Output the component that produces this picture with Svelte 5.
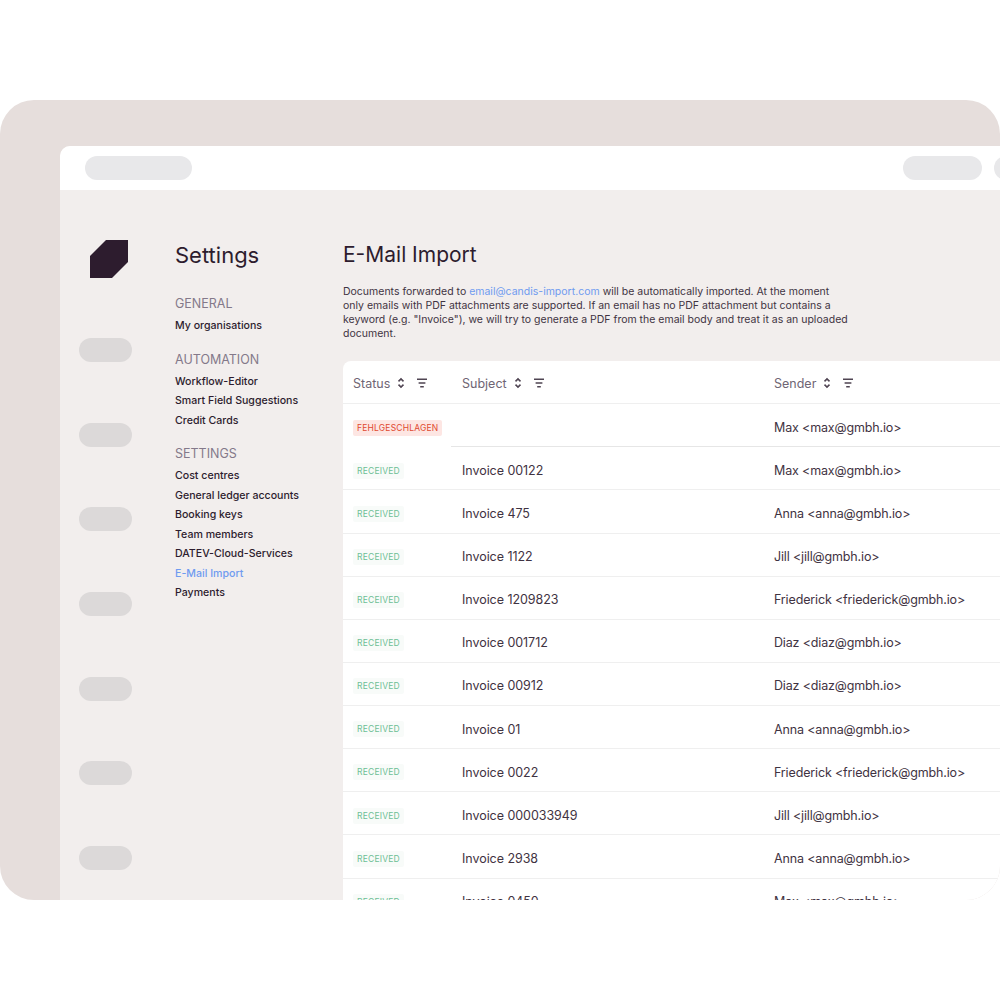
<script>
  const pillCount = 7;
  const pills = Array.from({ length: pillCount });
  const groups = [
    { title: 'GENERAL', items: ['My organisations'] },
    { title: 'AUTOMATION', items: ['Workflow-Editor', 'Smart Field Suggestions', 'Credit Cards'] },
    { title: 'SETTINGS', items: ['Cost centres', 'General ledger accounts', 'Booking keys', 'Team members', 'DATEV-Cloud-Services', 'E-Mail Import', 'Payments'] }
  ];
  const rows = [
    ['FEHLGESCHLAGEN', '', 'Max <max@gmbh.io>'],
    ['RECEIVED', 'Invoice 00122', 'Max <max@gmbh.io>'],
    ['RECEIVED', 'Invoice 475', 'Anna <anna@gmbh.io>'],
    ['RECEIVED', 'Invoice 1122', 'Jill <jill@gmbh.io>'],
    ['RECEIVED', 'Invoice 1209823', 'Friederick <friederick@gmbh.io>'],
    ['RECEIVED', 'Invoice 001712', 'Diaz <diaz@gmbh.io>'],
    ['RECEIVED', 'Invoice 00912', 'Diaz <diaz@gmbh.io>'],
    ['RECEIVED', 'Invoice 01', 'Anna <anna@gmbh.io>'],
    ['RECEIVED', 'Invoice 0022', 'Friederick <friederick@gmbh.io>'],
    ['RECEIVED', 'Invoice 000033949', 'Jill <jill@gmbh.io>'],
    ['RECEIVED', 'Invoice 2938', 'Anna <anna@gmbh.io>'],
    ['RECEIVED', 'Invoice 0450', 'Max <max@gmbh.io>']
  ];
  const cols = ['Status', 'Subject', 'Sender'];
</script>

<div class="page">
  <div class="frame">
    <div class="window">
      <header class="topbar">
        <span class="pill wide"></span>
        <span class="spacer"></span>
        <span class="pill mid"></span>
        <span class="pill mid"></span>
      </header>
      <div class="body">
        <aside class="rail">
          <svg class="logo" viewBox="0 0 38 38" width="38" height="38" aria-hidden="true">
            <path d="M16 0 H38 V22 L22 38 H0 V16 Z" fill="#2d1c2e"/>
          </svg>
          <div class="rail-pills">
            {#each pills as _}
              <span class="pill rail-pill"></span>
            {/each}
          </div>
        </aside>
        <nav class="nav">
          <h2>Settings</h2>
          {#each groups as g}
            <div class="group">
              <div class="group-title">{g.title}</div>
              <ul>
                {#each g.items as item}
                  <li class:active={item === 'E-Mail Import'}>{item}</li>
                {/each}
              </ul>
            </div>
          {/each}
        </nav>
        <main class="main">
          <h1>E-Mail Import</h1>
          <p class="intro">Documents forwarded to <span class="link">email@candis-import.com</span> will be automatically imported. At the moment only emails with PDF attachments are supported. If an email has no PDF attachment but contains a keyword (e.g. "Invoice"), we will try to generate a PDF from the email body and treat it as an uploaded document.</p>
          <section class="table">
            <div class="row head">
              {#each cols as c}
                <div class="th">
                  <span>{c}</span>
                  <svg class="sort" width="8" height="12" viewBox="0 0 8 12" aria-hidden="true">
                    <path d="M1.5 4.4 L4 1.9 L6.5 4.4 M1.5 7.6 L4 10.1 L6.5 7.6" fill="none" stroke="#4f4452" stroke-width="1.5"/>
                  </svg>
                  <svg class="filter" width="10" height="10" viewBox="0 0 10 10" aria-hidden="true">
                    <path d="M0 1.2 H10 M1.6 5 H8.4 M3.2 8.8 H6.8" fill="none" stroke="#4f4452" stroke-width="1.5"/>
                  </svg>
                </div>
              {/each}
            </div>
            {#each rows as r, i}
              <div class="row" class:first={i === 0}>
                <div class="cell"><span class="tag" class:fail={r[0] !== 'RECEIVED'}>{r[0]}</span></div>
                <div class="cell subject">{r[1]}</div>
                <div class="cell sender">{r[2]}</div>
              </div>
            {/each}
          </section>
        </main>
      </div>
    </div>
  </div>
</div>

<style>
  :global(body) {
    margin: 0;
    background: #fff;
  }
  .page {
    height: 1000px;
    padding-top: 100px;
    box-sizing: border-box;
    font-family: Inter, "Liberation Sans", sans-serif;
    color: #2d1c2e;
  }
  .frame {
    height: 800px;
    box-sizing: border-box;
    padding: 46px 0 0 60px;
    background: #e6dedc;
    border-radius: 34px;
    overflow: hidden;
  }
  .window {
    height: 100%;
    background: #f2eeed;
    border-top-left-radius: 10px;
    overflow: hidden;
  }
  .topbar {
    height: 44px;
    background: #fff;
    display: flex;
    align-items: center;
    gap: 12px;
    padding-left: 25px;
    width: 1000px;
    box-sizing: border-box;
  }
  .spacer {
    width: 687px;
    flex: none;
  }
  .pill {
    display: block;
    flex: none;
    height: 24px;
    border-radius: 12px;
    background: #e8e8ea;
  }
  .wide {
    width: 107px;
  }
  .mid {
    width: 79px;
  }
  .body {
    display: flex;
    height: 710px;
  }
  .rail {
    width: 115px;
    flex: none;
    padding: 50px 0 0 19px;
    box-sizing: border-box;
  }
  .logo {
    display: block;
    margin-left: 10.5px;
  }
  .rail-pills {
    margin-top: 60px;
    display: flex;
    flex-direction: column;
    gap: 60.7px;
  }
  .rail-pill {
    width: 53px;
    background: #dcd9d9;
  }
  .nav {
    width: 168px;
    flex: none;
    padding-top: 50px;
  }
  .nav h2 {
    margin: 0 0 24px;
    font-size: 22px;
    line-height: 30px;
    font-weight: 400;
  }
  .group {
    margin-bottom: 14px;
  }
  .group-title {
    font-size: 12.5px;
    line-height: 19px;
    color: #84798a;
  }
  .nav ul {
    list-style: none;
    margin: 3px 0 0;
    padding: 0;
  }
  .nav li {
    font-size: 10.6px;
    line-height: 19.5px;
    font-weight: 500;
    color: #2d1c2e;
  }
  .nav li.active {
    color: #6f9bf0;
  }
  .main {
    flex: none;
    width: 657px;
    padding-top: 50px;
  }
  h1 {
    margin: 0;
    font-size: 21px;
    line-height: 30px;
    font-weight: 400;
  }
  .intro {
    margin: 15px 0 0;
    width: 509px;
    font-size: 10.5px;
    line-height: 14px;
    color: #3f3342;
  }
  .link {
    color: #6f9bf0;
  }
  .table {
    margin-top: 20px;
    background: #fff;
    border-top-left-radius: 8px;
    height: 600px;
    overflow: hidden;
  }
  .row {
    display: grid;
    grid-template-columns: 119px 312px 1fr;
    height: 43.13px;
    box-sizing: border-box;
    border-bottom: 1px solid #efefef;
    align-items: center;
    padding-top: 4px;
    font-size: 12.5px;
    color: #3f3342;
  }
  .row.head {
    padding-top: 2px;
  }
  .row.first {
    border-bottom: 0;
    background: linear-gradient(#e6e6e6, #e6e6e6) no-repeat 108px 100% / 100% 1px;
  }
  .cell {
    white-space: nowrap;
  }
  .cell:first-child {
    padding-left: 10px;
  }
  .subject {
    letter-spacing: -0.05px;
  }
  .sender {
    letter-spacing: -0.15px;
  }
  .th {
    display: flex;
    align-items: center;
    font-size: 12.5px;
    color: #6f6574;
  }
  .th:first-child {
    padding-left: 10px;
  }
  .sort {
    margin-left: 7px;
  }
  .filter {
    margin-left: 12px;
  }
  .tag {
    display: inline-block;
    padding: 0 4px;
    height: 16px;
    line-height: 16px;
    font-size: 8.5px;
    letter-spacing: 0.2px;
    border-radius: 2px;
    color: #6dbf95;
    background: #f8fbf9;
    vertical-align: middle;
  }
  .tag.fail {
    color: #e0492f;
    background: #fde6e3;
  }
</style>
